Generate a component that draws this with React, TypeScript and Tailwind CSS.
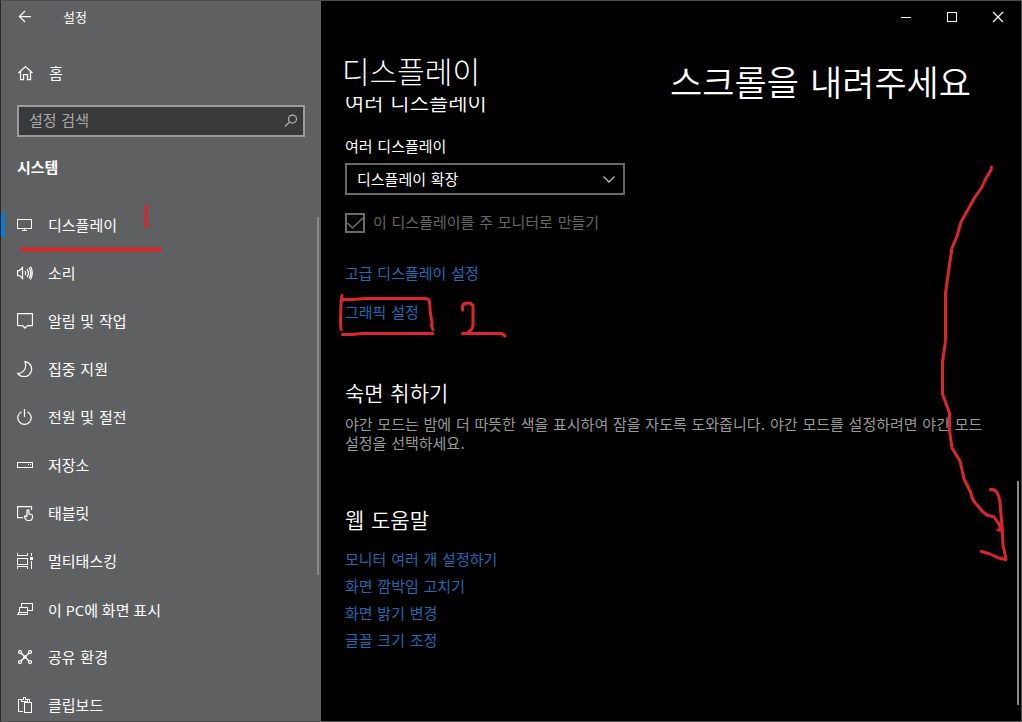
import React, { useState } from 'react';

const KR = "font-['DejaVu_Sans','Noto_Sans_CJK_KR',sans-serif]";
const KR_LATIN = "font-['Open_Sans','Noto_Sans_CJK_KR',sans-serif]";

const Icon: React.FC<{ children: React.ReactNode; crisp?: boolean }> = ({ children, crisp }) => (
    <svg
        className="h-4 w-4 shrink-0"
        viewBox="0 0 16 16"
        fill="none"
        stroke="currentColor"
        strokeWidth={crisp ? 1 : 1.25}
        shapeRendering={crisp ? 'crispEdges' : 'auto'}
        aria-hidden="true"
    >
        {children}
    </svg>
);

const NAV_ITEMS: { label: string; icon: React.ReactNode }[] = [
    {
        label: '디스플레이',
        icon: <Icon crisp><path d="M.5 2.5h14v9H.5zM7.5 12v1M5 13.5h5" /></Icon>,
    },
    {
        label: '소리',
        icon: (
            <Icon>
                <path d="M.5 5.5h2l3-3v11l-3-3h-2zM8 6q1.5 2 0 4M10 4q3 4 0 8M12 2.5q3.500 5.500 0 11M13.500 1.500q3.500 6.500 0 13" />
            </Icon>
        ),
    },
    {
        label: '알림 및 작업',
        icon: <Icon><path d="M.5.5h15v12h-5L8 15l-2.5-2.500h-5z" /></Icon>,
    },
    {
        label: '집중 지원',
        icon: <Icon><path d="M8 .6a7.600 7.600 0 1 1-7.300 11.800Q5 12.500 7.300 9T8 .6z" /></Icon>,
    },
    {
        label: '전원 및 절전',
        icon: <Icon><path d="M4.500 2.700a6.700 6.700 0 1 0 6 0M7.500 0v8" /></Icon>,
    },
    {
        label: '저장소',
        icon: <Icon crisp><path d="M.5 5.500h15v5H.5zM11 7.500h1M13 7.500h1" /></Icon>,
    },
    {
        label: '태블릿',
        icon: (
            <Icon>
                <path d="M6 12.500H.5v-11h14V5" />
                <path d="M10 11.500V6q0-1.200 1-1.200T12 6v3l2.500.5q1 .3 1 1.500v1q-.2 3.500-3 3.500h-1.500q-1.500 0-2.500-1.500l-1-2q-.2-1.500 1.300-1L10 12" />
            </Icon>
        ),
    },
    {
        label: '멀티태스킹',
        icon: (
            <Icon crisp>
                <path d="M.5 0v2.500h10V0M.5 5.500h10v6H.5zM.5 16v-2.500h10V16M14.500 0v3M14.500 8v8" />
                <path d="M13 4h3v3h-3z" fill="currentColor" stroke="none" />
            </Icon>
        ),
    },
    {
        label: '이 PC에 화면 표시',
        icon: <Icon crisp><path d="M4.500 6V2.500h11v7H11M2.500 6.500h8v5h-8zM2 11.500L.5 13.500h10v-2" /></Icon>,
    },
    {
        label: '공유 환경',
        icon: (
            <Icon>
                <path d="M4 4l8 8M12 4l-8 8" strokeWidth="1.400" />
                <circle cx="3" cy="3" r="1.500" />
                <circle cx="13" cy="3" r="1.500" />
                <circle cx="3" cy="13" r="1.500" />
                <circle cx="13" cy="13" r="1.500" />
                <circle cx="8" cy="8" r="1.200" fill="currentColor" />
            </Icon>
        ),
    },
    {
        label: '클립보드',
        icon: (
            <Icon crisp>
                <path d="M6 14.500H1.500v-12h3M9.500 2.500h3V5M4.500 4.500v-2h1.500v-2h2.500v2H10v2zM7.500 5.500h7v10h-7z" />
            </Icon>
        ),
    },
];

const HELP_LINKS = ['모니터 여러 개 설정하기', '화면 깜박임 고치기', '화면 밝기 변경', '글꼴 크기 조정'];

const Sidebar: React.FC<{ active: string; onSelect: (label: string) => void }> = ({ active, onSelect }) => (
    <aside className="flex w-80 shrink-0 flex-col bg-[#5f6062]">
        <div className="flex h-8 items-center">
            <button type="button" aria-label="뒤로" className="flex h-8 w-12 items-center justify-center">
                <Icon><path d="M14 7.500H2.500M8 2L2.500 7.500 8 13" /></Icon>
            </button>
            <span className="pt-0.5 pl-3.5 text-[13px] leading-4">설정</span>
        </div>

        <a href="#home" className="mt-4 flex h-12 items-center gap-4 pl-4">
            <Icon><path d="M1.500 8L8.500 1.500 15.500 8M3.500 6.500v8h3v-5h4v5h3v-8" /></Icon>
            <span className="pt-0.5 text-[15px] leading-5">홈</span>
        </a>

        <div className="mx-4 mt-2 flex h-8 items-center border-2 border-[#9b9c9d] bg-[#38393a] pr-1 pl-2.5">
            <input
                type="text"
                aria-label="설정 검색"
                placeholder="설정 검색"
                className="min-w-0 flex-1 bg-transparent text-[15px] leading-5 outline-none placeholder:text-[#a9a9a9]"
            />
            <span className="text-[#b0b0b0]">
                <Icon><circle cx="9.500" cy="6" r="4" /><path d="M6.500 9L2 13.500" /></Icon>
            </span>
        </div>

        <h2 className="mt-5 pt-px pl-4 text-[15px] leading-5 font-bold">시스템</h2>

        <nav className="relative mt-[23px] min-h-0 flex-1 overflow-hidden">
            <ul>
                {NAV_ITEMS.map(({ label, icon }) => (
                    <li key={label}>
                        <button
                            type="button"
                            onClick={() => onSelect(label)}
                            className="relative flex h-12 w-full items-center gap-[15px] pl-4 text-left"
                        >
                            {active === label && <span className="absolute top-3 left-0 h-6 w-1 bg-[#0f78cf]" />}
                            {icon}
                            <span className={`pt-0.5 text-[15px] leading-5 ${label.includes('PC') ? KR_LATIN : KR}`}>{label}</span>
                        </button>
                    </li>
                ))}
            </ul>
            <span className="absolute top-4 right-0.5 h-[358px] w-0.5 bg-[#88898a]" />
        </nav>
    </aside>
);

const WindowControls: React.FC = () => (
    <div className="flex h-8 justify-end">
        <button type="button" aria-label="최소화" className="flex w-[46px] items-center justify-center">
            <Icon crisp><path d="M3 8.500h10" /></Icon>
        </button>
        <button type="button" aria-label="최대화" className="flex w-[46px] items-center justify-center">
            <Icon crisp><path d="M3.500 3.500h9v9h-9z" /></Icon>
        </button>
        <button type="button" aria-label="닫기" className="flex w-[46px] items-center justify-center">
            <Icon><path d="M3 3l10 10M13 3L3 13" /></Icon>
        </button>
    </div>
);

// Freehand pen marks drawn over the window
const PenMarks: React.FC = () => (
    <svg
        className="pointer-events-none absolute -top-px -left-px h-full w-full overflow-visible"
        fill="none"
        stroke="#dc252d"
        strokeWidth="3"
        strokeLinecap="round"
        strokeLinejoin="round"
        aria-hidden="true"
    >
        <path d="M146.500 205.500L146 226l2 1" />
        <path d="M22 249.500L160 249.600" strokeWidth="4" />
        <path d="M342 295.500L341 303 340.500 321 341 329.500M342 299.500H353L365 298.500H425Q429 298.500 429.500 302L430.500 314 432 322 431.500 326 433 329.500" />
        <path d="M342.500 334.500H353L361 333.500H433" />
        <path d="M462.500 310V307Q463 303 467 303 473 303 473 307V325Q473 329 468 332.500M462.500 333.500H502L505 336" />
        <path d="M991.500 167L991 170 986 178 982 187 975 197 961 222 957 236 952 248 949 268 945.500 293V341L942.500 362V394L949.500 413V430L952 448 960 461 964 479 970 491 973 500 982 511 987 515 994 517 999 524 1001 530 998 530" />
        <path d="M990.500 489.500Q1000 488 1000.500 510L1002 525 1003 545 1006 559.500 1000 558.500 990 554 981.500 551.500" />
    </svg>
);

const App: React.FC = () => {
    const [active, setActive] = useState('디스플레이');

    return (
        <div className={`relative flex h-screen overflow-hidden border border-[#4d4e4e] border-l-[#24292b] bg-black text-white ${KR}`}>
            <Sidebar active={active} onSelect={setActive} />

            <main className="relative flex min-w-0 flex-1 flex-col">
                <WindowControls />
                <header className="flex h-16 items-start justify-between pr-[50px] pl-[21px]">
                    <h1 className="pt-5 text-[30px] leading-10 font-light">디스플레이</h1>
                    <p className="pt-[31px] text-[35px] leading-10 font-[350]">스크롤을 내려주세요</p>
                </header>

                <div className="min-h-0 flex-1 overflow-hidden px-6">
                    <section>
                        <h2 className="-mt-2 text-[21px] leading-7 font-[350]">여러 디스플레이</h2>
                        <label htmlFor="multi" className="mt-5 block text-[15px] leading-5">여러 디스플레이</label>
                        <div className="relative mt-1.5 w-[280px]">
                            <select
                                id="multi"
                                className="h-8 w-full appearance-none border-2 border-[#6a6a6a] bg-black pt-px pr-8 pl-2.5 text-[15px] leading-5"
                            >
                                <option>디스플레이 확장</option>
                                <option>디스플레이 복제</option>
                            </select>
                            <span className="pointer-events-none absolute top-2 right-2 text-[#c0c0c0]">
                                <Icon><path d="M2.500 5.500L8 11l5.500-5.500" /></Icon>
                            </span>
                        </div>
                        <label className="mt-4 flex items-center gap-2 py-0.5 text-[15px] leading-5 text-[#666]">
                            <span className="relative flex h-5 w-5">
                                <input type="checkbox" checked disabled readOnly className="h-5 w-5 appearance-none border-2 border-[#6a6a6a]" />
                                <svg className="pointer-events-none absolute inset-0 h-5 w-5" viewBox="0 0 20 20" fill="none" stroke="#7a7a7a" strokeWidth="1.250">
                                    <path d="M2.500 10L7.500 15 18 5" />
                                </svg>
                            </span>
                            이 디스플레이를 주 모니터로 만들기
                        </label>
                        <div className="mt-[29px] flex flex-col items-start gap-[19px] text-[15px] leading-5 text-[#1c6cb4]">
                            <a href="#advanced">고급 디스플레이 설정</a>
                            <a href="#graphics">그래픽 설정</a>
                        </div>
                    </section>

                    <section className="mt-[57px]">
                        <h2 className="text-[21px] leading-7 font-[350]">숙면 취하기</h2>
                        <p className="mt-2 text-[15px] leading-[19px] text-[#999]">
                            야간 모드는 밤에 더 따뜻한 색을 표시하여 잠을 자도록 도와줍니다. 야간 모드를 설정하려면 야간 모드 설정을 선택하세요.
                        </p>
                    </section>

                    <section className="mt-[53px]">
                        <h2 className="text-[21px] leading-7 font-[350]">웹 도움말</h2>
                        <ul className="mt-[15px] flex flex-col gap-[7px] text-[15px] leading-5 text-[#1c6cb4]">
                            {HELP_LINKS.map((text) => (
                                <li key={text}>
                                    <a href="#help">{text}</a>
                                </li>
                            ))}
                        </ul>
                    </section>
                </div>
                <span className="absolute right-0.5 bottom-4 h-56 w-0.5 bg-[#8a8a8a]" />
            </main>

            <PenMarks />
        </div>
    );
};

export default App;
